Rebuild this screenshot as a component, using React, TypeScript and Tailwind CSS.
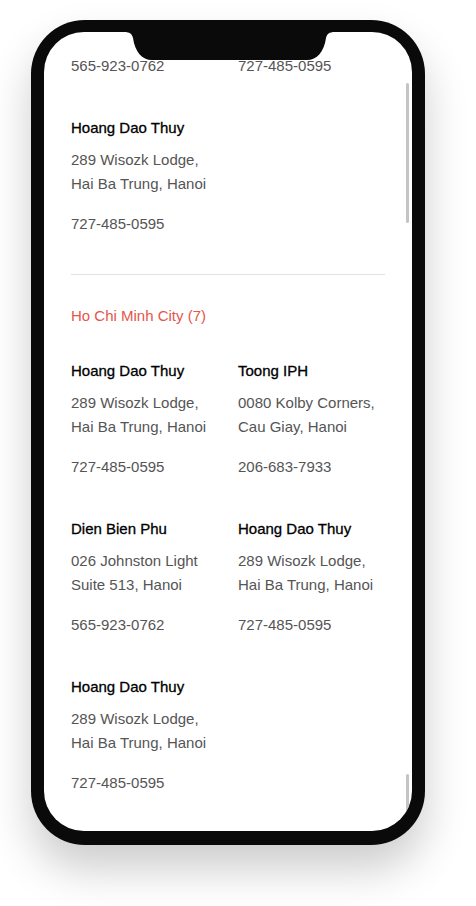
import React from 'react'

type Place = { name: string; street: string; city: string; phone: string }

const hcm: Place[] = [
  { name: 'Hoang Dao Thuy', street: '289 Wisozk Lodge,', city: 'Hai Ba Trung, Hanoi', phone: '727-485-0595' },
  { name: 'Toong IPH', street: '0080 Kolby Corners,', city: 'Cau Giay, Hanoi', phone: '206-683-7933' },
  { name: 'Dien Bien Phu', street: '026 Johnston Light', city: 'Suite 513, Hanoi', phone: '565-923-0762' },
  { name: 'Hoang Dao Thuy', street: '289 Wisozk Lodge,', city: 'Hai Ba Trung, Hanoi', phone: '727-485-0595' },
  { name: 'Hoang Dao Thuy', street: '289 Wisozk Lodge,', city: 'Hai Ba Trung, Hanoi', phone: '727-485-0595' },
]

function Location({ place }: { place: Place }) {
  return (
    <div className="text-[15px] leading-[24px]">
      <div className="text-black [-webkit-text-stroke:0.3px_#000]">{place.name}</div>
      <div className="mt-2 text-[#555]">
        <div>{place.street}</div>
        <div>{place.city}</div>
      </div>
      <div className="mt-4 text-[#555]">{place.phone}</div>
    </div>
  )
}

function Notch() {
  return (
    <svg
      className="absolute left-[80px] top-0"
      width="211"
      height="28"
      viewBox="0 0 211 28"
    >
      <path
        d="M0 0 H211 C205 0 203 2 202 6 C200 20 193 28 183 28 H28 C18 28 11 20 9 6 C8 2 6 0 0 0 Z"
        fill="#0a0a0a"
      />
    </svg>
  )
}

export default function App() {
  return (
    <div
      className="min-h-[906px] w-[476px] bg-white pt-[20px] pl-[31px]"
      style={{ fontFamily: '"Liberation Sans", Arial, sans-serif' }}
    >
      <div className="h-[825px] w-[394px] rounded-[54px] bg-[#0a0a0a] px-[13px] py-[12px] shadow-[0_24px_44px_rgba(0,0,0,0.2)]">
        <div className="relative h-[799px] w-[368px] overflow-hidden rounded-[40px] bg-white">
          <div className="px-[27px] pt-[22px]">
            <div className="grid grid-cols-[167px_1fr] text-[15px] leading-[24px] text-[#555]">
              <div>565-923-0762</div>
              <div>727-485-0595</div>
            </div>

            <div className="mt-[38px] border-b border-[#e2e2e2] pb-[38px]">
              <Location place={hcm[0]} />
            </div>

            <div className="mt-[29px] text-[15px] leading-[24px] text-[#e2574c]">
              Ho Chi Minh City (7)
            </div>

            <div className="mt-[31px] grid grid-cols-[167px_1fr] gap-y-[38px]">
              {hcm.map((p, i) => (
                <Location key={i} place={p} />
              ))}
            </div>
          </div>

          <Notch />
          <div className="absolute right-[3px] top-[51px] h-[140px] w-[3px] rounded-full bg-[#c4c4c4]" />
          <div className="absolute right-[3px] top-[742px] h-[40px] w-[3px] rounded-full bg-[#c4c4c4]" />
        </div>
      </div>
    </div>
  )
}
